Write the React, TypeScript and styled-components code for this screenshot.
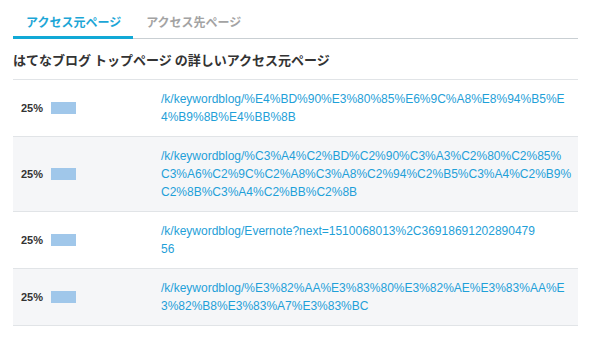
import React from "react";
import styled, { createGlobalStyle } from "styled-components";

const Global = createGlobalStyle`
  html, body { margin: 0; padding: 0; background: #fff; }
  body { font-family: "Liberation Sans", "Noto Sans CJK JP", sans-serif; color: #333; }
`;

const Page = styled.div`
  padding: 10px 12px 0 13px;
`;

const Tabs = styled.div`
  display: flex;
  border-bottom: 1px solid #c9cfd3;
`;

const Tab = styled.div<{ $active?: boolean }>`
  padding: 3px 12px 5px 13px;
  line-height: 18px;
  font-size: 12px;
  font-weight: bold;
  font-family: "Noto Sans CJK JP", sans-serif;
  color: ${(p) => (p.$active ? "#1ca6d6" : "#a3a3a3")};
  border-bottom: 3px solid ${(p) => (p.$active ? "#11a9d6" : "transparent")};
  margin-bottom: -1px;
`;

const Heading = styled.h2`
  margin: 0;
  padding: 12px 0 10px;
  font-size: 13px;
  line-height: 18px;
  font-weight: bold;
  color: #333;
  font-family: "Noto Sans CJK JP", sans-serif;
  border-bottom: 1px solid #e1e4e7;
`;

const Table = styled.div`
  display: flex;
  flex-direction: column;
`;

const Row = styled.div<{ $alt?: boolean }>`
  display: grid;
  grid-template-columns: 140px 1fr;
  background: ${(p) => (p.$alt ? "#f5f6f8" : "#fff")};
  border-bottom: 1px solid #e1e4e7;
`;

const RateCell = styled.div`
  display: flex;
  align-items: center;
  padding-left: 8px;
`;

const Percent = styled.span`
  font-size: 11px;
  font-weight: bold;
  color: #333;
  width: 30px;
`;

const Bar = styled.span`
  display: inline-block;
  height: 12px;
  background: #a0c7ea;
`;

const UrlCell = styled.div`
  padding: 10px 8px 10px 8px;
`;

const Link = styled.a`
  font-size: 12px;
  line-height: 18px;
  color: #1fa0d8;
  text-decoration: none;
  display: flex;
  flex-direction: column;
`;

const LinkLine = styled.span`
  white-space: nowrap;
`;

const rows = [
  {
    pct: 25,
    lines: ["/k/keywordblog/%E4%BD%90%E3%80%85%E6%9C%A8%E8%94%B5%E", "4%B9%8B%E4%BB%8B"],
  },
  {
    pct: 25,
    lines: [
      "/k/keywordblog/%C3%A4%C2%BD%C2%90%C3%A3%C2%80%C2%85%",
      "C3%A6%C2%9C%C2%A8%C3%A8%C2%94%C2%B5%C3%A4%C2%B9%",
      "C2%8B%C3%A4%C2%BB%C2%8B",
    ],
  },
  {
    pct: 25,
    lines: ["/k/keywordblog/Evernote?next=1510068013%2C36918691202890479", "56"],
  },
  {
    pct: 25,
    lines: ["/k/keywordblog/%E3%82%AA%E3%83%80%E3%82%AE%E3%83%AA%E", "3%82%B8%E3%83%A7%E3%83%BC"],
  },
];

export default function App() {
  return (
    <>
      <Global />
      <Page>
        <Tabs>
          <Tab $active>アクセス元ページ</Tab>
          <Tab>アクセス先ページ</Tab>
        </Tabs>
        <Heading>はてなブログ トップページ の詳しいアクセス元ページ</Heading>
        <Table>
          {rows.map((r, i) => (
            <Row key={i} $alt={i % 2 === 1}>
              <RateCell>
                <Percent>{r.pct}%</Percent>
                <Bar style={{ width: r.pct }} />
              </RateCell>
              <UrlCell>
                <Link href="#">
                  {r.lines.map((l, j) => (
                    <LinkLine key={j}>{l}</LinkLine>
                  ))}
                </Link>
              </UrlCell>
            </Row>
          ))}
        </Table>
      </Page>
    </>
  );
}
